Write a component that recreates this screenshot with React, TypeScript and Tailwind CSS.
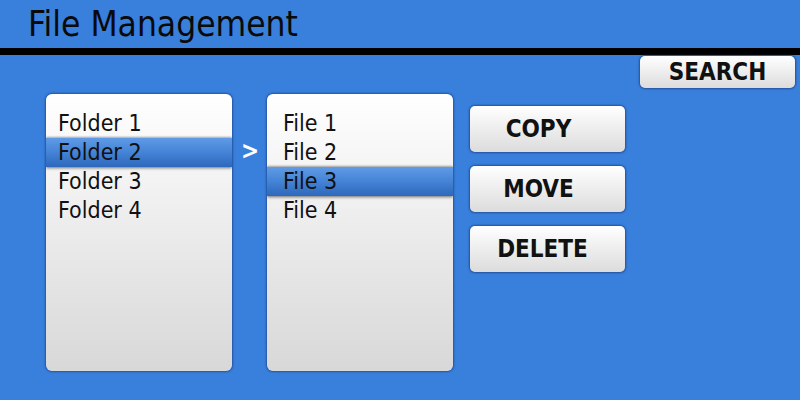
import React from "react";

const font = { fontFamily: '"DejaVu Sans Condensed", "DejaVu Sans", Verdana, sans-serif' };

function Btn({ label, className }: { label: string; className?: string }) {
  return (
    <div
      className={
        "w-[155px] rounded-[5px] bg-gradient-to-b from-white to-[#dcdcdc] shadow-[0_0_2px_1px_rgba(20,50,110,0.6)] flex items-center justify-center font-bold text-[24px] text-[#111] " +
        (className ?? "")
      }
    >
      {label}
    </div>
  );
}

export default function App() {
  return (
    <div className="w-[800px] h-[400px] bg-[#397fdc] overflow-hidden" style={font}>
      <div className="h-[48px] pl-[28px] pt-[7px] text-[35px] leading-none text-[#0a0a0a]">File Management</div>
      <div className="h-[7px] bg-black" />
      <div className="flex justify-end pr-[5px] mt-[1px]">
        <Btn label="SEARCH" className="h-[32px]" />
      </div>
      <div className="flex mt-[6px] pl-[46px]">
        <div className="w-[186px] h-[277px] rounded-[6px] bg-gradient-to-b from-white to-[#d8d8d8] shadow-[0_0_2px_1px_rgba(20,50,110,0.55)] pt-[15px] overflow-hidden">
          {["Folder 1", "Folder 2", "Folder 3", "Folder 4"].map((it, i) => (
            <div
              key={it}
              className={
                "h-[29px] leading-[29px] text-[23px] text-[#111] pl-[12px] " +
                (i === 1
                  ? "bg-gradient-to-b from-[#5f9be6] via-[#4483d6] to-[#2d68bb] shadow-[0_1px_3px_rgba(0,0,0,0.55),0_-1px_2px_rgba(0,0,0,0.25)]"
                  : "")
              }
            >
              {it}
            </div>
          ))}
        </div>
        <div className="w-[35px] flex justify-center pt-[45px] pl-[1px] text-white font-bold text-[24px] leading-none">&gt;</div>
        <div className="w-[186px] h-[277px] rounded-[6px] bg-gradient-to-b from-white to-[#d8d8d8] shadow-[0_0_2px_1px_rgba(20,50,110,0.55)] pt-[15px] overflow-hidden">
          {["File 1", "File 2", "File 3", "File 4"].map((it, i) => (
            <div
              key={it}
              className={
                "h-[29px] leading-[29px] text-[23px] text-[#111] pl-[16px] " +
                (i === 2
                  ? "bg-gradient-to-b from-[#5f9be6] via-[#4483d6] to-[#2d68bb] shadow-[0_1px_3px_rgba(0,0,0,0.55),0_-1px_2px_rgba(0,0,0,0.25)]"
                  : "")
              }
            >
              {it}
            </div>
          ))}
        </div>
        <div className="ml-[17px] pt-[12px] flex flex-col gap-[14px]">
          <Btn label="COPY" className="h-[46px] pr-[18px]" />
          <Btn label="MOVE" className="h-[46px] pr-[18px]" />
          <Btn label="DELETE" className="h-[46px] pr-[10px]" />
        </div>
      </div>
    </div>
  );
}
